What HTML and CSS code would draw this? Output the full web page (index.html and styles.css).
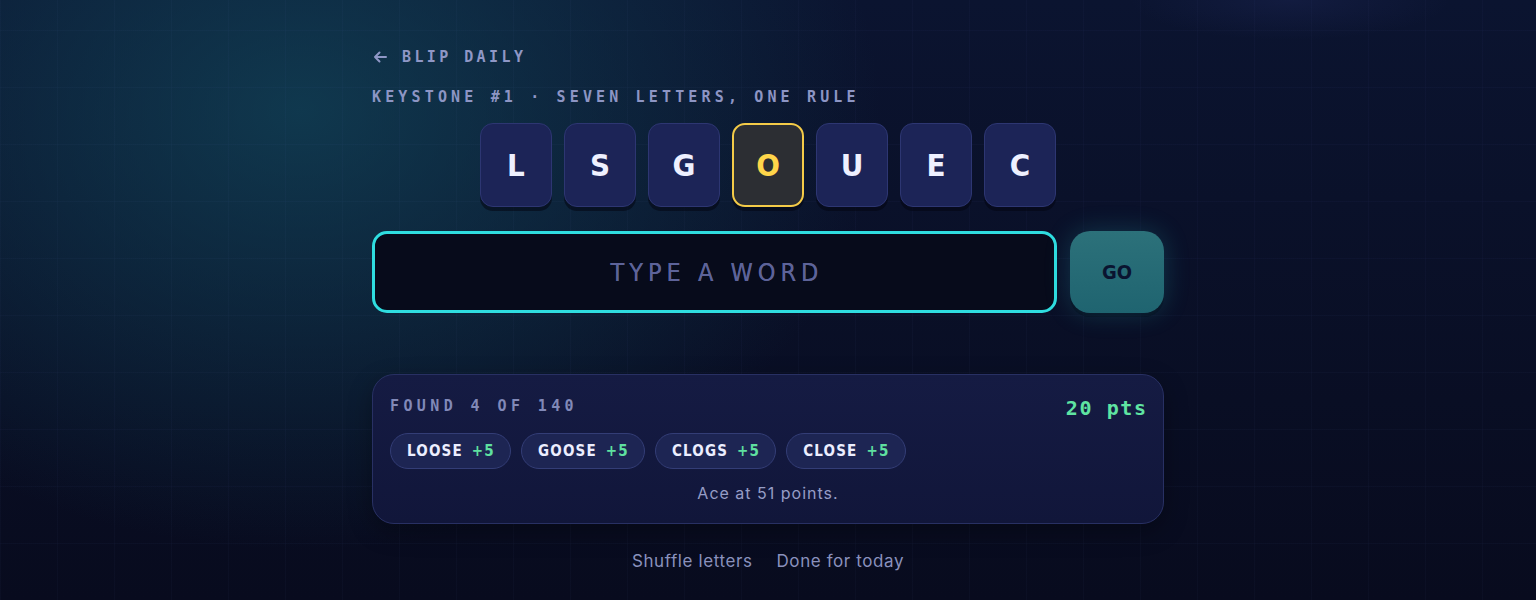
FILE: index.html
```html
<!DOCTYPE html>
<html lang="en">
<head>
<meta charset="utf-8">
<title>Keystone #1 · Blip Daily</title>
<link rel="stylesheet" href="styles.css">
</head>
<body>
<main class="page">
  <div class="col">
    <a class="back"><svg class="arrow" width="14" height="12" viewBox="0 0 14 12" aria-hidden="true"><path d="M13 6H2M6.5 1.5L2 6l4.5 4.5" fill="none" stroke="currentColor" stroke-width="2" stroke-linecap="round" stroke-linejoin="round"/></svg><span>BLIP DAILY</span></a>
    <div class="sub">KEYSTONE #1 · SEVEN LETTERS, ONE RULE</div>
    <div class="tiles">
      <div class="tile">L</div>
      <div class="tile">S</div>
      <div class="tile">G</div>
      <div class="tile key">O</div>
      <div class="tile">U</div>
      <div class="tile">E</div>
      <div class="tile">C</div>
    </div>
    <div class="entry">
      <div class="input">TYPE A WORD</div>
      <button class="go">GO</button>
    </div>
    <section class="card">
      <div class="card-head">
        <span class="found">FOUND 4 OF 140</span>
        <span class="pts">20 pts</span>
      </div>
      <div class="chips">
        <span class="chip">LOOSE <b>+5</b></span>
        <span class="chip">GOOSE <b>+5</b></span>
        <span class="chip">CLOGS <b>+5</b></span>
        <span class="chip">CLOSE <b>+5</b></span>
      </div>
      <p class="ace">Ace at 51 points.</p>
    </section>
    <nav class="foot">
      <a>Shuffle letters</a>
      <a>Done for today</a>
    </nav>
  </div>
</main>
</body>
</html>
```
FILE: styles.css
```css
html, body {
  margin: 0;
  height: 100%;
}
body {
  background-color: #090d22;
  background-image:
    linear-gradient(rgba(120,140,230,0.03) 1px, transparent 1px),
    linear-gradient(90deg, rgba(120,140,230,0.03) 1px, transparent 1px),
    radial-gradient(ellipse 580px 440px at 300px 110px, rgba(18,72,92,0.7), rgba(18,72,92,0) 100%),
    radial-gradient(ellipse 160px 40px at 1290px 0px, rgba(40,50,110,0.25), rgba(40,50,110,0) 100%),
    linear-gradient(180deg, #0b1430 0%, #080b1e 100%);
  background-size: 57px 57px, 57px 57px, 100% 100%, 100% 100%, 100% 100%;
  background-position: 0 30px, 0 0, 0 0, 0 0, 0 0;
  overflow: hidden;
}
.page {
  display: flex;
  justify-content: center;
}
.col {
  width: 792px;
  padding-top: 47px;
  display: flex;
  flex-direction: column;
}
.back {
  display: flex;
  align-items: center;
  gap: 15px;
  font-family: "DejaVu Sans Mono", monospace;
  font-weight: bold;
  font-size: 15px;
  line-height: 20px;
  letter-spacing: 3.4px;
  color: #8f97c6;
}
.arrow {
  display: block;
  margin-left: 1px;
}
.sub {
  margin-top: 20px;
  font-family: "DejaVu Sans Mono", monospace;
  font-weight: bold;
  font-size: 15px;
  line-height: 20px;
  letter-spacing: 4.15px;
  color: #8d95c4;
}
.tiles {
  margin-top: 16px;
  display: flex;
  justify-content: center;
  gap: 12px;
}
.tile {
  width: 72px;
  height: 84px;
  box-sizing: border-box;
  border-radius: 13px;
  background: #1c2457;
  border: 1px solid #2d3672;
  box-shadow: 0 4px 0 rgba(3,6,18,0.55);
  display: flex;
  align-items: center;
  justify-content: center;
  font-family: "DejaVu Sans Condensed", "DejaVu Sans", sans-serif;
  font-weight: bold;
  font-size: 31px;
  color: #eef0ff;
}
.tile.key {
  background: #2c2e33;
  border: 2px solid #f4cb48;
  color: #ffd54a;
}
.entry {
  margin-top: 24px;
  display: flex;
  gap: 13px;
}
.input {
  flex: 1;
  height: 82px;
  box-sizing: border-box;
  border: 3px solid #2fdde0;
  border-radius: 15px;
  background: #070b1b;
  display: flex;
  align-items: center;
  justify-content: center;
  font-family: "DejaVu Sans Condensed", "DejaVu Sans", sans-serif;
  font-size: 25px;
  letter-spacing: 5px;
  color: #5d6399;
  padding-left: 5px;
  text-shadow: 0 0 0.6px #5d6399;
}
.go {
  width: 94px;
  height: 82px;
  border: none;
  border-radius: 20px;
  background: linear-gradient(180deg, #2c717a 0%, #1f6470 100%);
  box-shadow: 0 0 26px rgba(40,190,200,0.22), 0 4px 0 rgba(3,6,18,0.4);
  font-family: "DejaVu Sans Condensed", "DejaVu Sans", sans-serif;
  font-weight: bold;
  font-size: 20px;
  color: #0a1430;
  padding: 0;
}
.card {
  margin-top: 61px;
  box-sizing: border-box;
  height: 150px;
  border: 1px solid #283063;
  border-radius: 22px;
  background: linear-gradient(180deg, #151b43 0%, #11163a 100%);
  padding: 20px 17px 18px 17px;
  box-shadow: 0 8px 24px rgba(0,0,0,0.3);
}
.card-head {
  display: flex;
  justify-content: space-between;
  align-items: center;
  height: 22px;
}
.found {
  font-family: "DejaVu Sans Mono", monospace;
  font-weight: bold;
  font-size: 15px;
  letter-spacing: 4.4px;
  color: #8189b8;
}
.pts {
  font-family: "DejaVu Sans Mono", monospace;
  font-weight: bold;
  font-size: 20px;
  letter-spacing: 1.6px;
  margin-right: -1.6px;
  color: #5fe4a2;
  margin-top: 3px;
}
.chips {
  margin-top: 16px;
  display: flex;
  gap: 10px;
}
.chip {
  height: 36px;
  box-sizing: border-box;
  padding: 0 15px 0 16px;
  border-radius: 18px;
  background: #1d2553;
  border: 1px solid #333d76;
  display: flex;
  align-items: center;
  font-family: "DejaVu Sans Condensed", "DejaVu Sans", sans-serif;
  font-weight: bold;
  font-size: 15px;
  letter-spacing: 1.2px;
  color: #eceeff;
  white-space: pre;
}
.chip b {
  color: #5fe0a0;
  font-weight: bold;
  margin-left: 3px;
}
.ace {
  margin: 13px 0 0 0;
  text-align: center;
  font-family: "Inter", sans-serif;
  font-size: 16px;
  line-height: 22px;
  letter-spacing: 1px;
  color: #969dc6;
}
.foot {
  margin-top: 25px;
  display: flex;
  justify-content: center;
  gap: 24px;
  font-family: "Inter", sans-serif;
  font-size: 17px;
  line-height: 24px;
  letter-spacing: 0.6px;
  color: #8a91bd;
}
.foot a {
  cursor: pointer;
}
```
